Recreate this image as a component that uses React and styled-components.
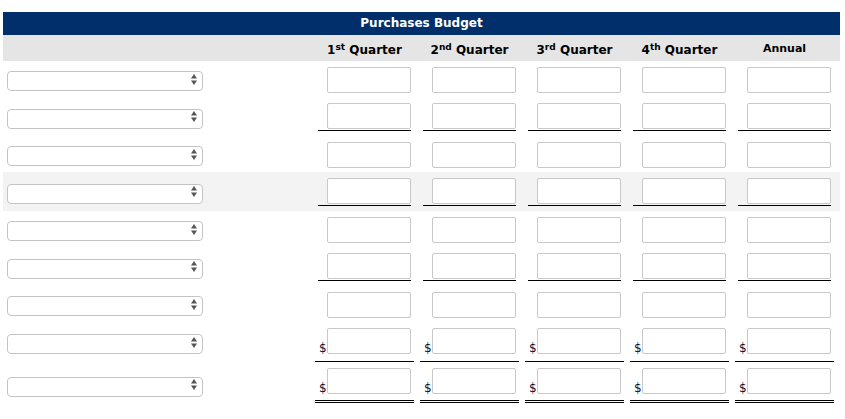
import styled, { createGlobalStyle } from "styled-components";

const GlobalStyle = createGlobalStyle`
  body {
    margin: 0;
    background: #ffffff;
    font-family: "DejaVu Sans", Verdana, sans-serif;
  }
`;

const QUARTERS = [
  { n: "1", sup: "st" },
  { n: "2", sup: "nd" },
  { n: "3", sup: "rd" },
  { n: "4", sup: "th" },
];

// line: none | single | dollar | total
const ROWS = [
  { line: "none" },
  { line: "single" },
  { line: "none" },
  { line: "single", shaded: true },
  { line: "none" },
  { line: "single" },
  { line: "none" },
  { line: "dollar" },
  { line: "total" },
];

const SelectArrows = () => (
  <svg width="6" height="11" viewBox="0 0 6 11">
    <path d="M3 0 L6 4.5 L0 4.5 Z" fill="#555" />
    <path d="M0 6.5 L6 6.5 L3 11 Z" fill="#555" />
  </svg>
);

const DropDown = () => (
  <SelectWrap>
    <SelectBox aria-label="account">
      <option value=""></option>
    </SelectBox>
    <ArrowSlot>
      <SelectArrows />
    </ArrowSlot>
  </SelectWrap>
);

const ValueCell = ({ line }) => {
  const withDollar = line === "dollar" || line === "total";
  return (
    <CellOuter $line={line}>
      <LineBox $line={line}>
        {withDollar && <Dollar>$</Dollar>}
        <NumInput type="text" />
      </LineBox>
    </CellOuter>
  );
};

export default function App() {
  return (
    <>
      <GlobalStyle />
      <Page>
        <Table>
          <TitleBar>Purchases Budget</TitleBar>
          <HeadRow>
            <span />
            {QUARTERS.map((q) => (
              <HeadCell key={q.n}>
                {q.n}
                <sup>{q.sup}</sup> Quarter
              </HeadCell>
            ))}
            <HeadCell $small>Annual</HeadCell>
          </HeadRow>
          {ROWS.map((row, i) => (
            <BodyRow key={i} $shaded={row.shaded}>
              <LabelCell>
                <DropDown />
              </LabelCell>
              {[0, 1, 2, 3, 4].map((c) => (
                <ValueCell key={c} line={row.line} />
              ))}
            </BodyRow>
          ))}
        </Table>
      </Page>
    </>
  );
}

const Page = styled.div`
  padding: 12px 0 0 3px;
`;

const Table = styled.div`
  width: 837px;
`;

const TitleBar = styled.div`
  height: 23px;
  line-height: 22px;
  background: #002f6c;
  color: #ffffff;
  text-align: center;
  font-weight: bold;
  font-size: 12px;
`;

const grid = `
  display: grid;
  grid-template-columns: 309px repeat(5, 105px);
  padding-right: 3px;
`;

const HeadRow = styled.div`
  ${grid}
  height: 26px;
  align-items: center;
  background: #e5e5e5;
`;

const HeadCell = styled.div`
  text-align: center;
  font-weight: bold;
  font-size: ${(p) => (p.$small ? "11px" : "12px")};
  color: #000000;
  padding-top: ${(p) => (p.$small ? "0" : "3px")};
  white-space: nowrap;

  sup {
    font-size: 9px;
    line-height: 0;
    vertical-align: 4px;
  }
`;

const BodyRow = styled.div`
  ${grid}
  background: ${(p) => (p.$shaded ? "#f3f3f3" : "transparent")};
`;

const LabelCell = styled.div`
  display: flex;
  align-items: center;
  padding: 1px 0 0 4px;
`;

const SelectWrap = styled.div`
  position: relative;
  width: 196px;
  height: 20px;
`;

const SelectBox = styled.select`
  appearance: none;
  -webkit-appearance: none;
  width: 100%;
  height: 100%;
  margin: 0;
  border: 1px solid #c4c4c4;
  border-radius: 4px;
  background: #ffffff;
  font-family: "DejaVu Sans", sans-serif;
  font-size: 11px;
  outline: none;
`;

const ArrowSlot = styled.span`
  position: absolute;
  right: 6px;
  top: 4px;
  display: flex;
  pointer-events: none;
`;

const cellPad = {
  none: "4px",
  single: "5px",
  dollar: "0",
  total: "4px",
};

const CellOuter = styled.div`
  padding-top: 6px;
  padding-bottom: ${(p) => cellPad[p.$line]};
`;

const lineStyle = {
  none: "margin: 0 6px; padding-bottom: 0;",
  single: "margin: 0 6px; padding-bottom: 1px; border-bottom: 1px solid #000;",
  dollar:
    "margin: 0 3px; padding: 0 3px 7px 4px; border-bottom: 1px solid #000;",
  total:
    "margin: 0 3px; padding: 0 3px 6px 4px; border-bottom: 3px double #000;",
};

const LineBox = styled.div`
  display: flex;
  align-items: flex-end;
  justify-content: ${(p) =>
    p.$line === "dollar" || p.$line === "total" ? "space-between" : "flex-end"};
  ${(p) => lineStyle[p.$line]}
`;

const Dollar = styled.span`
  font-size: 12px;
  line-height: 12px;
  color: #0b0b2a;
  margin-bottom: 0;
`;

const NumInput = styled.input`
  box-sizing: border-box;
  width: 84px;
  height: 26px;
  margin: 0;
  padding: 0 4px;
  border: 1px solid #c8c8c8;
  border-radius: 2px;
  background: #ffffff;
  font-family: "DejaVu Sans", sans-serif;
  font-size: 11px;
  outline: none;
`;
